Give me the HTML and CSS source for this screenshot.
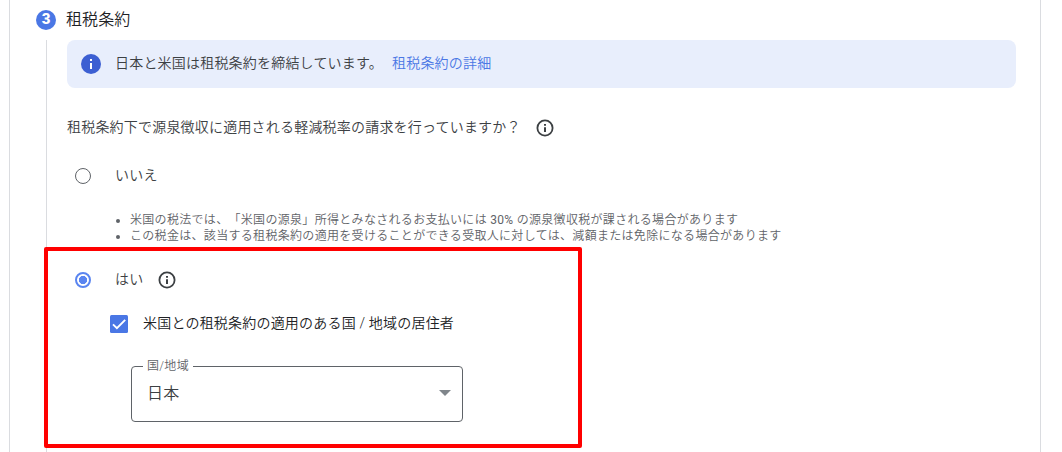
FILE: index.html
```html
<!DOCTYPE html>
<html lang="ja">
<head>
    <meta charset="UTF-8">
    <meta name="viewport" content="width=device-width, initial-scale=1.0">
    <title>租税条約</title>
    <link rel="stylesheet" href="styles.css">
</head>
<body>
    <div class="card">
        <div class="step-header">
            <span class="step-number">3</span>
            <h2 class="step-title">租税条約</h2>
        </div>

        <div class="step-body">
            <div class="banner">
                <svg class="banner-icon" width="20" height="20" viewBox="0 0 20 20">
                    <circle cx="10" cy="10" r="10" fill="#3c5fd2"/>
                    <path d="M9 5h2v2H9zM9 9h2v6H9z" fill="#fff"/>
                </svg>
                <span class="banner-text">日本と米国は租税条約を締結しています。</span>
                <a class="banner-link">租税条約の詳細</a>
            </div>

            <div class="question">
                <span class="question-text">租税条約下で源泉徴収に適用される軽減税率の請求を行っていますか？</span>
                <svg class="info-icon" width="18" height="18" viewBox="0 0 18 18">
                    <circle cx="9" cy="9" r="7.6" fill="none" stroke="#3c4043" stroke-width="1.8"/>
                    <path d="M8 5h2v1.8H8zM8 8.2h2V13H8z" fill="#3c4043"/>
                </svg>
            </div>

            <div class="option option-no">
                <span class="radio"></span>
                <span class="option-label">いいえ</span>
            </div>
            <ul class="notes">
                <li>米国の税法では、「米国の源泉」所得とみなされるお支払いには <span class="rate">30%</span> の源泉徴収税が課される場合があります</li>
                <li>この税金は、該当する租税条約の適用を受けることができる受取人に対しては、減額または免除になる場合があります</li>
            </ul>

            <div class="option option-yes">
                <span class="radio checked"></span>
                <span class="option-label">はい</span>
                <svg class="info-icon" width="18" height="18" viewBox="0 0 18 18">
                    <circle cx="9" cy="9" r="7.6" fill="none" stroke="#3c4043" stroke-width="1.8"/>
                    <path d="M8 5h2v1.8H8zM8 8.2h2V13H8z" fill="#3c4043"/>
                </svg>
            </div>

            <div class="resident">
                <svg class="checkbox" width="18" height="18" viewBox="0 0 18 18">
                    <rect width="18" height="18" rx="1.5" fill="#4a77e5"/>
                    <path d="M3 9.4l3.9 3.8L15.2 4.9" fill="none" stroke="#fff" stroke-width="1.9"/>
                </svg>
                <span class="resident-text">米国との租税条約の適用のある国 / 地域の居住者</span>
            </div>

            <div class="select">
                <span class="select-label">国/地域</span>
                <span class="select-value">日本</span>
                <svg class="select-arrow" width="12" height="6" viewBox="0 0 12 6">
                    <path d="M0 0h12L6 6z" fill="#80868b"/>
                </svg>
            </div>
        </div>
    </div>
    <div class="highlight"></div>
</body>
</html>
```
FILE: styles.css
```css
* {
    box-sizing: border-box;
}

body {
    margin: 0;
    height: 452px;
    overflow: hidden;
    position: relative;
    background: #fff;
    color: #3c4043;
    font-family: Roboto, "Noto Sans CJK JP", sans-serif;
    font-size: 14px;
    font-weight: 350;
    line-height: 20px;
    letter-spacing: 0.2px;
    white-space: nowrap;
    text-spacing-trim: space-all;
}

.card {
    display: flex;
    flex-direction: column;
    width: 1032px;
    height: 452px;
    margin-left: 9px;
    border-left: 1px solid #dadce0;
    border-right: 1px solid #dadce0;
}

.step-header {
    display: flex;
    align-items: center;
    gap: 10px;
    height: 40px;
    padding-left: 26px;
}

.step-number {
    width: 20px;
    height: 20px;
    border-radius: 50%;
    background: #4a77e5;
    color: #fff;
    font-size: 15px;
    font-weight: 900;
    line-height: 19px;
    letter-spacing: 0;
    text-align: center;
}

.step-title {
    margin: 0;
    color: #202124;
    font-size: 16px;
    font-weight: 350;
    letter-spacing: 0.1px;
}

.step-body {
    flex: 1;
    margin-left: 36px;
    padding: 0 24px 0 20px;
    border-left: 1px solid #dadce0;
}

.banner {
    display: flex;
    align-items: center;
    height: 48px;
    padding: 0 14px;
    border-radius: 8px;
    background: #e8eefc;
}

.banner-icon {
    margin-right: 14px;
}

.banner-text,
.banner-link {
    margin-bottom: 2px;
}

.banner-link {
    margin-left: 9px;
    color: #4a77e5;
}

.question {
    display: flex;
    align-items: center;
    gap: 15px;
    height: 20px;
    margin-top: 30px;
}

.question-text,
.resident-text {
    margin-bottom: 2px;
}

.option {
    display: flex;
    align-items: center;
    height: 20px;
    padding-left: 8px;
}

.option-no {
    margin-top: 28px;
}

.option-yes {
    margin-top: 26px;
}

.option-label {
    margin: 0 15px 2px 24px;
}

.radio {
    width: 16px;
    height: 16px;
    border: 1px solid #5f6368;
    border-radius: 50%;
}

.radio.checked {
    border: 2px solid #5a85f0;
    background: radial-gradient(circle, #5a85f0 3.8px, transparent 4.4px);
}

.notes {
    margin: 26px 0 0;
    padding-left: 63px;
    color: #5f6368;
    font-size: 12px;
    line-height: 16px;
    letter-spacing: 0.31px;
}

.rate {
    font-weight: 400;
}

.resident {
    display: flex;
    align-items: center;
    gap: 15px;
    height: 20px;
    margin-top: 24px;
    padding-left: 43px;
    color: #202124;
}

.select {
    position: relative;
    display: flex;
    align-items: center;
    justify-content: space-between;
    width: 332px;
    height: 56px;
    margin: 32px 0 0 64px;
    padding: 0 11px 0 15px;
    border: 1px solid #5f6368;
    border-radius: 4px;
}

.select-label {
    position: absolute;
    top: -9px;
    left: 11px;
    padding: 0 4px;
    background: #fff;
    color: #5f6368;
    font-size: 12px;
    line-height: 16px;
    letter-spacing: 0.3px;
}

.select-value {
    font-size: 16px;
}

.select-arrow {
    margin-bottom: 2px;
}

/* red frame over the selected answer */
.highlight {
    position: absolute;
    top: 247px;
    left: 44px;
    width: 538px;
    height: 201px;
    border: 4px solid #f00;
    border-radius: 2px;
}
```
